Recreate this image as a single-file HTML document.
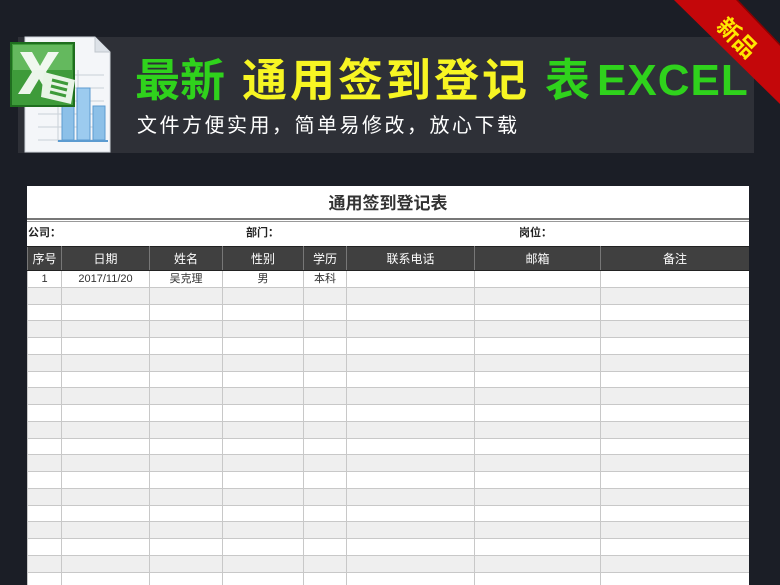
<!DOCTYPE html>
<html><head><meta charset="utf-8"><style>
*{margin:0;padding:0;box-sizing:border-box}
body{width:780px;height:585px;overflow:hidden;background:#1b1e26;position:relative;font-family:"Liberation Sans","Noto Sans CJK SC",sans-serif}
.band{position:absolute;left:18px;top:37px;width:736px;height:116px;background:#2e3037}
.t{position:absolute;font-weight:bold;font-size:45px;line-height:46px;top:58px;white-space:nowrap}
.g{color:#2fd21c}.y{color:#f7f523}
.sub{position:absolute;left:137px;top:114px;color:#fff;font-size:20px;letter-spacing:2.5px;line-height:24px;white-space:nowrap}
.sheet{position:absolute;left:27px;top:186px;width:722px;height:399px;background:#fff;overflow:hidden}
.ttl{position:absolute;left:0;top:0;width:722px;height:32px;text-align:center;font-size:17px;font-weight:bold;color:#333;line-height:36px}
.dl{position:absolute;left:0;top:32px;width:722px;height:4px;border-top:2px solid #777;border-bottom:1px solid #999}
.info{position:absolute;top:38px;font-size:11px;font-weight:bold;color:#222}
table{position:absolute;left:0;top:60px;border-collapse:collapse;width:722px;table-layout:fixed}
td{border:1px solid #c8c8c8;height:16.75px;font-size:11px;text-align:center;color:#333;padding:0;line-height:14px}
tr.h td{background:#404040;color:#fff;height:24px;border-color:#222 #777;font-size:12px}
tr:nth-child(odd):not(.h) td{background:#efefef}
</style></head><body>
<div class="band"></div>
<svg style="position:absolute;left:0;top:30px" width="130" height="130" viewBox="0 0 130 130">
<path d="M25 7 H95 L110 22 V122 H25 Z" fill="#f4f6f9" stroke="#cfd4da"/>
<path d="M95 7 V22 H110" fill="#dde2e8" stroke="#c0c6cd"/>
<g stroke="#c9d0d8" stroke-width="1"><path d="M38 45H104M38 58H104M38 71H104M38 84H104M38 97H104M38 110H104M58 40V112M78 40V112"/></g>
<rect x="62" y="70" width="12" height="40" fill="#8cc0e8" stroke="#5c9bd0"/>
<rect x="77" y="58" width="13" height="52" fill="#9ccbef" stroke="#5c9bd0"/>
<rect x="93" y="76" width="12" height="34" fill="#8cc0e8" stroke="#5c9bd0"/>
<path d="M58 111H108" stroke="#5c9bd0" stroke-width="2"/>
<rect x="11" y="13" width="63" height="63" fill="#3e9b3a" stroke="#1f6e1f" stroke-width="2"/>
<rect x="13" y="15" width="59" height="25" fill="#64b95e"/>
<path d="M20 22h12l8 14 8-14h11l-13 20 14 22H48l-9-15-9 15H18l14-22z" fill="#fff" opacity=".9"/>
<path d="M44 42l31 8-4 24-30-7z" fill="#e8f4e6"/>
<path d="M52 50l16 4M51 56l16 4M50 62l16 4" stroke="#3e9b3a" stroke-width="3"/>
</svg>
<span class="t g" style="left:135px">最新</span>
<span class="t y" style="left:242px;letter-spacing:3px">通用签到登记</span>
<span class="t g" style="left:545px">表</span>
<span class="t g" style="left:597px;font-size:44px;letter-spacing:1px">EXCEL</span>
<div class="sub">文件方便实用，简单易修改，放心下载</div>
<svg style="position:absolute;left:0;top:0" width="780" height="110"><polygon points="674,0 738,0 780,44 780,104" fill="#c4070a"/><polygon points="738,0 780,44 780,46 736,0" fill="#8a0000"/></svg>
<div style="position:absolute;left:714px;top:26px;color:#ffe600;font-size:23px;transform:rotate(45deg);line-height:24px;font-weight:bold">新品</div>
<div class="sheet">
<div class="ttl">通用签到登记表</div>
<div class="dl"></div>
<div class="info" style="left:1px">公司：</div>
<div class="info" style="left:219px">部门：</div>
<div class="info" style="left:492px">岗位：</div>
<table>
<colgroup><col style="width:34px"><col style="width:88px"><col style="width:73px"><col style="width:81px"><col style="width:43px"><col style="width:128px"><col style="width:126px"><col style="width:149px"></colgroup>
<tr class="h"><td>序号</td><td>日期</td><td>姓名</td><td>性别</td><td>学历</td><td>联系电话</td><td>邮箱</td><td>备注</td></tr>
<tr><td>1</td><td>2017/11/20</td><td>吴克理</td><td>男</td><td>本科</td><td></td><td></td><td></td></tr>
<tr><td></td><td></td><td></td><td></td><td></td><td></td><td></td><td></td></tr>
<tr><td></td><td></td><td></td><td></td><td></td><td></td><td></td><td></td></tr>
<tr><td></td><td></td><td></td><td></td><td></td><td></td><td></td><td></td></tr>
<tr><td></td><td></td><td></td><td></td><td></td><td></td><td></td><td></td></tr>
<tr><td></td><td></td><td></td><td></td><td></td><td></td><td></td><td></td></tr>
<tr><td></td><td></td><td></td><td></td><td></td><td></td><td></td><td></td></tr>
<tr><td></td><td></td><td></td><td></td><td></td><td></td><td></td><td></td></tr>
<tr><td></td><td></td><td></td><td></td><td></td><td></td><td></td><td></td></tr>
<tr><td></td><td></td><td></td><td></td><td></td><td></td><td></td><td></td></tr>
<tr><td></td><td></td><td></td><td></td><td></td><td></td><td></td><td></td></tr>
<tr><td></td><td></td><td></td><td></td><td></td><td></td><td></td><td></td></tr>
<tr><td></td><td></td><td></td><td></td><td></td><td></td><td></td><td></td></tr>
<tr><td></td><td></td><td></td><td></td><td></td><td></td><td></td><td></td></tr>
<tr><td></td><td></td><td></td><td></td><td></td><td></td><td></td><td></td></tr>
<tr><td></td><td></td><td></td><td></td><td></td><td></td><td></td><td></td></tr>
<tr><td></td><td></td><td></td><td></td><td></td><td></td><td></td><td></td></tr>
<tr><td></td><td></td><td></td><td></td><td></td><td></td><td></td><td></td></tr>
<tr><td></td><td></td><td></td><td></td><td></td><td></td><td></td><td></td></tr>
</table>
</div>
</body></html>
